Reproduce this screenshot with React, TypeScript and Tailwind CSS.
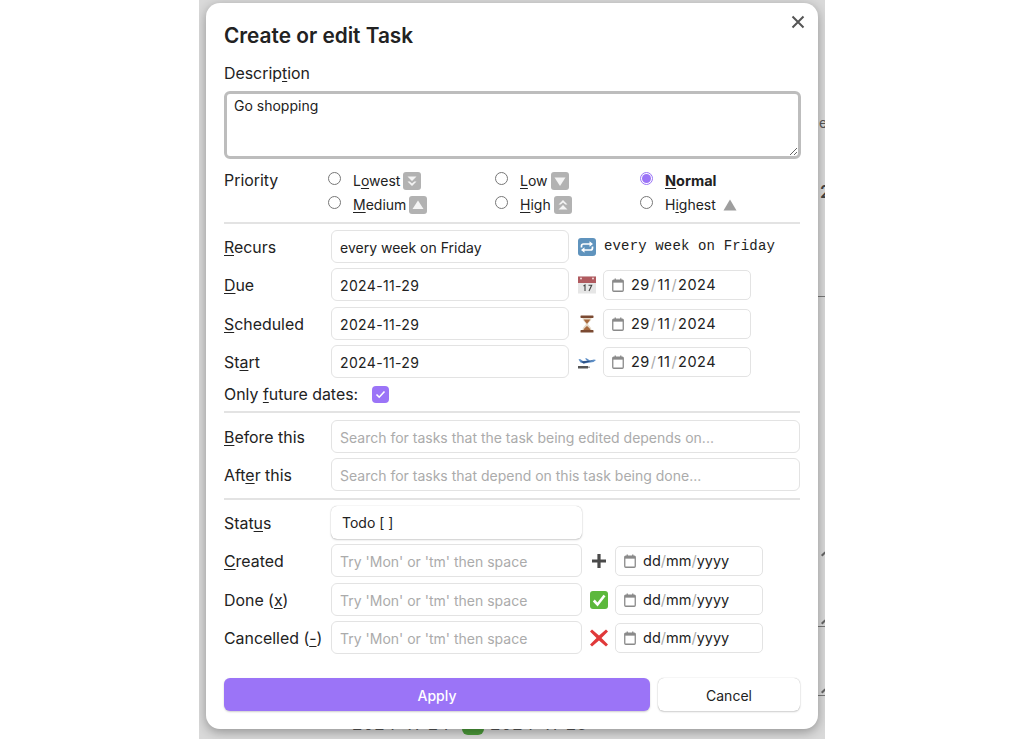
import type { ReactNode } from "react";

const FONT = "font-['Inter','Liberation_Sans',sans-serif]";

// letter of a label that gets the access key underline
function Key({ children }: { children: ReactNode }) {
  return <span className="underline underline-offset-2">{children}</span>;
}

function CalendarIcon() {
  return (
    <svg width="12" height="14" viewBox="0 0 12 14" className="shrink-0">
      <rect x="0.75" y="2.25" width="10.5" height="11" rx="1" fill="none" stroke="#8a8a8a" strokeWidth="1.3" />
      <rect x="0.75" y="2.25" width="10.5" height="2.4" fill="#8a8a8a" />
      <rect x="2.6" y="0.5" width="1.3" height="2" fill="#8a8a8a" />
      <rect x="8.1" y="0.5" width="1.3" height="2" fill="#8a8a8a" />
    </svg>
  );
}

function DateBox({ parts, filled }: { parts: [string, string, string]; filled?: boolean }) {
  return (
    <div className="flex h-[30px] w-[148px] shrink-0 items-center gap-[7px] rounded-[5px] border border-[#e3e3e3] bg-white pl-[8px] text-[14.5px] text-[#222]">
      <CalendarIcon />
      <span className={filled ? "tracking-[0.5px]" : ""}>
        {parts[0]}
        <span className={`text-[#aaa] ${filled ? "px-[1px]" : ""}`}>/</span>
        {parts[1]}
        <span className={`text-[#aaa] ${filled ? "px-[1px]" : ""}`}>/</span>
        {parts[2]}
      </span>
    </div>
  );
}

function TextBox({ value, placeholder, wide, digits }: { value?: string; placeholder?: string; wide?: boolean; digits?: boolean }) {
  return (
    <input
      readOnly
      value={value}
      placeholder={placeholder}
      className={`h-[33px] shrink-0 rounded-[6px] border border-[#e3e3e3] bg-white px-[8px] pt-[2px] text-[14px] text-[#222] outline-none placeholder:text-[#ababab] ${
        wide ? "w-[251px]" : "w-[238px]"
      } ${digits ? "tracking-[0.35px]" : ""}`}
    />
  );
}

function PriorityIcon({ kind }: { kind: "lowest" | "low" | "medium" | "high" }) {
  return (
    <svg width="18" height="18" viewBox="0 0 18 18" className="shrink-0">
      <rect width="18" height="18" rx="3" fill="#b2b2b2" />
      {kind === "low" && <path d="M3.5 5.5h11L9 14z" fill="#f4f4f4" />}
      {kind === "medium" && <path d="M3.5 13h11L9 4.5z" fill="#f4f4f4" />}
      {kind === "lowest" && <path d="M4.5 4.5h9L9 9zM4.5 9.5h2.2L9 11.6l2.3-2.1h2.2L9 14z" fill="#f4f4f4" />}
      {kind === "high" && <path d="M4.5 13.5h9L9 9zM4.5 8.5h2.2L9 6.4l2.3 2.1h2.2L9 4z" fill="#f4f4f4" />}
    </svg>
  );
}

function Radio({ checked }: { checked?: boolean }) {
  return checked ? (
    <span className="flex h-[13px] w-[13px] shrink-0 items-center justify-center rounded-full border border-[#9b74f7] bg-white">
      <span className="block h-[9px] w-[9px] rounded-full bg-[#9b74f7]" />
    </span>
  ) : (
    <span className="block h-[13px] w-[13px] shrink-0 rounded-full border border-[#777] bg-white" />
  );
}

function PriorityOption({ label, checked, icon }: { label: ReactNode; checked?: boolean; icon?: ReactNode }) {
  return (
    <div className="flex h-[24px] items-center">
      <div className="-mt-[5px] shrink-0">
        <Radio checked={checked} />
      </div>
      <div className={`ml-[12px] flex items-center gap-[3px] ${checked ? "text-[14.5px] font-bold" : "text-[14px]"}`}>
        <span className={checked ? "" : "-mt-[2px]"}>{label}</span>
        {icon}
      </div>
    </div>
  );
}

function Repeat() {
  return (
    <svg width="18" height="18" viewBox="0 0 18 18" className="shrink-0">
      <rect width="18" height="18" rx="3" fill="#5f93bd" />
      <path d="M3.5 9.5V8a2 2 0 0 1 2-2h7M14.5 8.5V10a2 2 0 0 1-2 2h-7" fill="none" stroke="#fff" strokeWidth="1.7" />
      <path d="M11.5 3.2 15 6l-3.5 2.8zM6.5 9.2 3 12l3.5 2.8z" fill="#fff" />
    </svg>
  );
}

function CalendarEmoji() {
  return (
    <svg width="18" height="18" viewBox="0 0 18 18" className="shrink-0">
      <rect y="0.5" width="18" height="17" fill="#e6e6e6" />
      <rect y="0.5" width="18" height="6.5" fill="#b05a5f" />
      <circle cx="3" cy="2.5" r="1" fill="#f3d9d9" />
      <circle cx="15" cy="2.5" r="1" fill="#f3d9d9" />
      <path d="M5.5 10 7 9v6M10.5 9.3h3.2L11 15" fill="none" stroke="#444" strokeWidth="1.1" />
    </svg>
  );
}

function Hourglass() {
  return (
    <svg width="14" height="18" viewBox="0 0 14 18" className="shrink-0">
      <rect x="0.5" y="0.5" width="13" height="2.4" rx="0.6" fill="#7b4a32" />
      <rect x="0.5" y="15.1" width="13" height="2.4" rx="0.6" fill="#7b4a32" />
      <path d="M2.5 3h9c0 3-3 4.5-3.5 6 .5 1.500 3.500 3 3.500 6h-9c0-3 3-4.500 3.500-6C5.500 7.500 2.500 6 2.500 3z" fill="#e5d9c8" />
      <path d="M3.800 4.500h6.400C9.500 6.500 7.500 7.500 7 9 6.500 7.500 4.500 6.500 3.800 4.500zM3.500 15c.5-2 2.500-3 3.500-4 1 1 3 2 3.500 4z" fill="#a8683c" />
    </svg>
  );
}

function Plane() {
  return (
    <svg width="18" height="18" viewBox="0 0 18 18" className="shrink-0">
      <path d="M0.500 6.500 2 6l3 2 4-.2L7 5.500l1.500-.2L12 7.500l4-1 2 .5-2.500 2L6 10.500 2.500 9.500z" fill="#5e8fc7" />
      <path d="M3 8.500 15 7.500l-9.500 3z" fill="#2c4f82" />
      <rect x="0" y="13" width="10" height="2.500" fill="#555" />
      <rect x="10" y="13.500" width="2" height="1.500" fill="#aaa" />
    </svg>
  );
}

function PlusIcon() {
  return (
    <svg width="14" height="14" viewBox="0 0 14 14" className="shrink-0">
      <path d="M5.400 0h3.200v5.400H14v3.200H8.600V14H5.400V8.600H0V5.400h5.400z" fill="#4a4a4a" />
    </svg>
  );
}

function CheckEmoji() {
  return (
    <svg width="18" height="18" viewBox="0 0 18 18" className="shrink-0">
      <rect width="18" height="18" rx="3" fill="#5cb83c" />
      <path d="M3.800 9.500 7.500 13.500 14.500 4.500" fill="none" stroke="#fff" strokeWidth="2.600" />
    </svg>
  );
}

function CrossEmoji() {
  return (
    <svg width="18" height="18" viewBox="0 0 18 18" className="shrink-0">
      <path d="M2 0.500 9 6.500 16 0.500 18 2.500 11.500 9 18 15.500 16 17.500 9 11.500 2 17.500 0 15.500 6.500 9 0 2.500z" fill="#e0393a" />
    </svg>
  );
}

function Row({ label, className, children }: { label: ReactNode; className: string; children: ReactNode }) {
  return (
    <div className={`flex items-center ${className}`}>
      <div className="w-[107px] shrink-0 pt-[2px] text-[15.9px]">{label}</div>
      {children}
    </div>
  );
}

function Divider({ className }: { className: string }) {
  return <div className={`h-[2px] bg-[#e3e3e3] ${className}`} />;
}

export default function App() {
  const date: [string, string, string] = ["29", "11", "2024"];
  const empty: [string, string, string] = ["dd", "mm", "yyyy"];
  const hint = "Try 'Mon' or 'tm' then space";

  return (
    <div className={`flex h-[739px] w-full justify-center overflow-hidden bg-white ${FONT}`}>
      <div className="relative h-[739px] w-[626px] overflow-hidden bg-[#d9d9d9] pl-[7px] pt-[3px]">
        {/* task list showing behind the modal */}
        <div className="absolute left-[153px] top-[712px] text-[17px] tracking-[0.6px] text-[#555]">2024-11-24</div>
        <div className="absolute left-[291px] top-[712px] text-[17px] tracking-[0.6px] text-[#555]">2024-11-25</div>
        <div className="absolute left-[263px] top-[723px] h-[12px] w-[22px] rounded-[6px] bg-[#4c9a3a]" />
        <div className="absolute left-[619px] top-[296px] h-px w-[7px] bg-[#777]" />
        <div className="absolute left-[619px] top-[626px] h-px w-[7px] bg-[#777]" />
        <div className="absolute left-[619px] top-[695px] h-px w-[7px] bg-[#777]" />
        <div className="absolute left-[622px] top-[553px] h-[2px] w-[5px] -rotate-45 bg-[#666]" />
        <div className="absolute left-[622px] top-[621px] h-[2px] w-[5px] -rotate-45 bg-[#666]" />
        <div className="absolute left-[622px] top-[690px] h-[2px] w-[5px] -rotate-45 bg-[#666]" />
        <div className="absolute left-[620px] top-[112px] text-[14px] text-[#555]">e</div>
        <div className="absolute left-[621px] top-[180px] text-[17px] font-semibold text-[#444]">2</div>

        <div className="relative flex h-[726px] w-[612px] flex-col rounded-[14px] bg-white px-[18px] text-[#222] shadow-[0_3px_11px_rgba(0,0,0,0.32)]">
          <svg width="14" height="14" viewBox="0 0 14 14" className="absolute right-[13px] top-[12px]">
            <path d="M1.500 1.500 12.500 12.500M12.500 1.500 1.500 12.500" stroke="#555" strokeWidth="2" fill="none" />
          </svg>

          <h1 className="mt-[19px] text-[20.8px] font-semibold leading-[28px] text-[#222]">Create or edit Task</h1>
          <div className="mt-[12px] text-[15.9px] leading-[24px]">
            Descrip<Key>t</Key>ion
          </div>
          <textarea
            readOnly
            value="Go shopping"
            className="mt-[5px] h-[68px] w-[577px] rounded-[6px] border-[3px] border-[#bdbdbd] bg-white px-[7px] py-[2px] text-[14px] leading-[20px] text-[#222] outline-none"
          />

          <div className="mt-[10px] flex">
            <div className="w-[104px] text-[15.9px] leading-[24px]">Priority</div>
            <div className="flex w-[167px] flex-col">
              <PriorityOption label={<>L<Key>o</Key>west</>} icon={<PriorityIcon kind="lowest" />} />
              <PriorityOption label={<><Key>M</Key>edium</>} icon={<PriorityIcon kind="medium" />} />
            </div>
            <div className="flex w-[145px] flex-col">
              <PriorityOption label={<><Key>L</Key>ow</>} icon={<PriorityIcon kind="low" />} />
              <PriorityOption label={<><Key>H</Key>igh</>} icon={<PriorityIcon kind="high" />} />
            </div>
            <div className="flex flex-col">
              <PriorityOption checked label={<><Key>N</Key>ormal</>} />
              <PriorityOption
                label={<>H<Key>i</Key>ghest</>}
                icon={
                  <svg width="14" height="12" viewBox="0 0 14 12" className="ml-[4px] shrink-0">
                    <path d="M7 0.500 13.500 11.500H0.500z" fill="#9e9e9e" />
                  </svg>
                }
              />
            </div>
          </div>

          <Divider className="mt-[5px]" />

          <Row className="mt-[6px]" label={<><Key>R</Key>ecurs</>}>
            <TextBox value="every week on Friday" />
            <div className="ml-[9px] flex items-center gap-[8px]">
              <Repeat />
              <span className="font-['Liberation_Mono',monospace] text-[14px] tracking-[0.15px] text-[#222]">every week on Friday</span>
            </div>
          </Row>
          <Row className="mt-[5px]" label={<><Key>D</Key>ue</>}>
            <TextBox digits value="2024-11-29" />
            <div className="ml-[9px] flex w-[18px] justify-center"><CalendarEmoji /></div>
            <div className="ml-[7px]"><DateBox filled parts={date} /></div>
          </Row>
          <Row className="mt-[6px]" label={<><Key>S</Key>cheduled</>}>
            <TextBox digits value="2024-11-29" />
            <div className="ml-[9px] flex w-[18px] justify-center"><Hourglass /></div>
            <div className="ml-[7px]"><DateBox filled parts={date} /></div>
          </Row>
          <Row className="mt-[5px]" label={<>St<Key>a</Key>rt</>}>
            <TextBox digits value="2024-11-29" />
            <div className="ml-[9px] flex w-[18px] justify-center"><Plane /></div>
            <div className="ml-[7px]"><DateBox filled parts={date} /></div>
          </Row>

          <div className="mt-[4px] flex h-[24px] items-center text-[15.9px]">
            <span className="pt-[2px]">Only <Key>f</Key>uture dates:</span>
            <span className="ml-[14px] flex h-[17px] w-[17px] items-center justify-center rounded-[4px] bg-[#9b74f7]">
              <svg width="11" height="9" viewBox="0 0 11 9">
                <path d="M1.500 4.500 4.200 7.200 9.500 1.500" fill="none" stroke="#fff" strokeWidth="1.600" />
              </svg>
            </span>
          </div>

          <Divider className="mt-[5px]" />

          <Row className="mt-[7px]" label={<><Key>B</Key>efore this</>}>
            <input
              readOnly
              placeholder="Search for tasks that the task being edited depends on..."
              className="h-[33px] w-[469px] rounded-[6px] border border-[#e3e3e3] bg-white px-[8px] pt-[2px] text-[14px] outline-none placeholder:text-[#ababab]"
            />
          </Row>
          <Row className="mt-[5px]" label={<>Aft<Key>e</Key>r this</>}>
            <input
              readOnly
              placeholder="Search for tasks that depend on this task being done..."
              className="h-[33px] w-[469px] rounded-[6px] border border-[#e3e3e3] bg-white px-[8px] pt-[2px] text-[14px] outline-none placeholder:text-[#ababab]"
            />
          </Row>

          <Divider className="mt-[7px]" />

          <Row className="mt-[6px]" label={<>Stat<Key>u</Key>s</>}>
            <div className="flex h-[33px] w-[251px] items-center rounded-[6px] bg-white pl-[11px] text-[14px] shadow-[0_1px_2px_rgba(0,0,0,0.18),0_0_1px_rgba(0,0,0,0.3)]">
              Todo [ ]
            </div>
          </Row>
          <Row className="mt-[5px]" label={<><Key>C</Key>reated</>}>
            <TextBox placeholder={hint} wide />
            <div className="ml-[8px] flex w-[18px] justify-center"><PlusIcon /></div>
            <div className="ml-[7px]"><DateBox parts={empty} /></div>
          </Row>
          <Row className="mt-[6px]" label={<>Done (<Key>x</Key>)</>}>
            <TextBox placeholder={hint} wide />
            <div className="ml-[8px] flex w-[18px] justify-center"><CheckEmoji /></div>
            <div className="ml-[7px]"><DateBox parts={empty} /></div>
          </Row>
          <Row className="mt-[5px]" label={<>Cancelled (<Key>-</Key>)</>}>
            <TextBox placeholder={hint} wide />
            <div className="ml-[8px] flex w-[18px] justify-center"><CrossEmoji /></div>
            <div className="ml-[7px]"><DateBox parts={empty} /></div>
          </Row>

          <div className="mt-[24px] flex gap-[8px]">
            <button className="h-[33px] w-[426px] rounded-[6px] bg-[#9b74f7] pt-[1px] text-[14px] font-medium text-white shadow-[0_1px_2px_rgba(0,0,0,0.2)]">
              Apply
            </button>
            <button className="h-[33px] w-[142px] rounded-[6px] bg-white pt-[1px] text-[14px] text-[#222] shadow-[0_1px_2px_rgba(0,0,0,0.18),0_0_1px_rgba(0,0,0,0.3)]">
              Cancel
            </button>
          </div>
        </div>
      </div>
    </div>
  );
}
